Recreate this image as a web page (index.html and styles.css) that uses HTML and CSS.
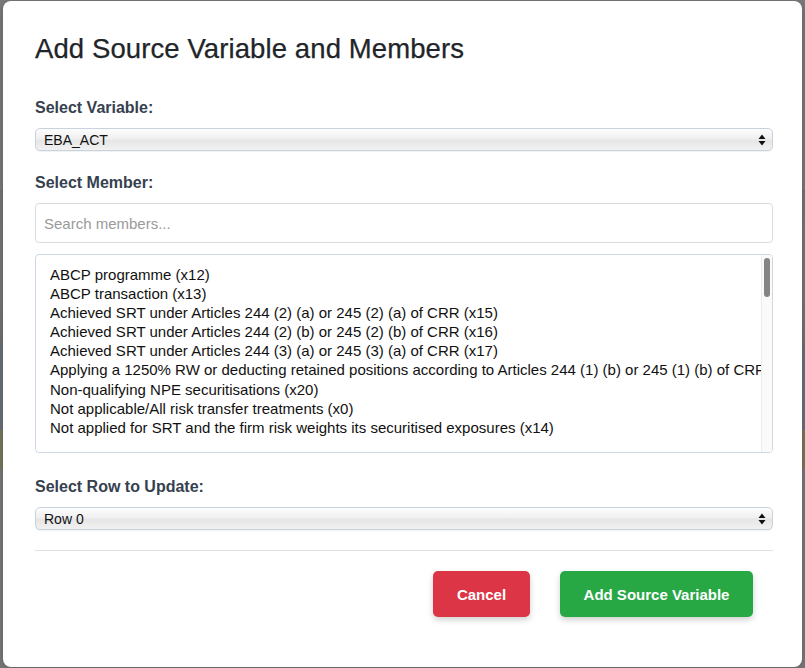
FILE: index.html
```html
<!DOCTYPE html>
<html>
<head>
<meta charset="utf-8">
<link rel="stylesheet" href="styles.css">
</head>
<body>
<div class="backdrop">
  <div class="modal">
    <h2 class="title">Add Source Variable and Members</h2>

    <div class="group group-first">
      <label class="label">Select Variable:</label>
      <div class="select">
        <span>EBA_ACT</span>
        <svg class="arrows" width="8" height="12" viewBox="0 0 8 12"><path d="M4 0.5 L7.5 5 L0.5 5 Z M0.5 7 L7.5 7 L4 11.5 Z" fill="#111"/></svg>
      </div>
    </div>

    <div class="group group-mid">
      <label class="label">Select Member:</label>
      <div class="search">Search members...</div>
      <div class="list">
        <div class="items">
          <div class="item">ABCP programme (x12)</div>
          <div class="item">ABCP transaction (x13)</div>
          <div class="item">Achieved SRT under Articles 244 (2) (a) or 245 (2) (a) of CRR (x15)</div>
          <div class="item">Achieved SRT under Articles 244 (2) (b) or 245 (2) (b) of CRR (x16)</div>
          <div class="item">Achieved SRT under Articles 244 (3) (a) or 245 (3) (a) of CRR (x17)</div>
          <div class="item">Applying a 1250% RW or deducting retained positions according to Articles 244 (1) (b) or 245 (1) (b) of CRR (x18)</div>
          <div class="item">Non-qualifying NPE securitisations (x20)</div>
          <div class="item">Not applicable/All risk transfer treatments (x0)</div>
          <div class="item">Not applied for SRT and the firm risk weights its securitised exposures (x14)</div>
        </div>
        <div class="track"><div class="thumb"></div></div>
      </div>
    </div>

    <div class="group group-last">
      <label class="label">Select Row to Update:</label>
      <div class="select">
        <span>Row 0</span>
        <svg class="arrows" width="8" height="12" viewBox="0 0 8 12"><path d="M4 0.5 L7.5 5 L0.5 5 Z M0.5 7 L7.5 7 L4 11.5 Z" fill="#111"/></svg>
      </div>
    </div>

    <div class="divider"></div>

    <div class="footer">
      <button class="btn btn-cancel">Cancel</button>
      <button class="btn btn-add">Add Source Variable</button>
    </div>
  </div>
</div>
</body>
</html>
```

FILE: styles.css
```css
* { box-sizing: border-box; }
html, body {
  margin: 0;
  padding: 0;
  width: 805px;
  height: 668px;
  overflow: hidden;
}
body {
  font-family: "Liberation Sans", Arial, sans-serif;
  background: linear-gradient(to bottom,
    #7b7b7b 0, #7b7b7b 190px, #6f6f6f 190px, #777 192px,
    #787878 300px, #727272 345px, #6c727c 345px, #6c727c 430px,
    #7a7a62 430px, #7a7a62 470px, #7a7a7a 470px, #7a7a7a 668px);
}
.backdrop {
  padding: 1px 3px 0 3px;
  height: 668px;
}
.modal {
  background: #fff;
  border-radius: 8px;
  height: 666px;
  padding: 31px 29px 0 32px;
  box-shadow: 0 2px 10px rgba(0,0,0,0.25);
}
.title {
  margin: 0 0 30px 0;
  font-size: 27.5px;
  line-height: 34px;
  font-weight: 500;
  color: #212529;
  letter-spacing: 0.1px;
  -webkit-text-stroke: 0.25px #212529;
}
.group {
  display: flex;
  flex-direction: column;
}
.group-first { margin-bottom: 20px; }
.group-mid { margin-bottom: 22px; }
.group-last { margin-bottom: 20px; }
.label {
  font-size: 16px;
  line-height: 24px;
  font-weight: 700;
  color: #36414f;
  margin-bottom: 8px;
}
.select {
  height: 23px;
  border: 1px solid #c8d3de;
  border-radius: 5px;
  background: linear-gradient(to bottom, #fdfdfd 0%, #f0f0f0 45%, #e6e6e6 55%, #f1f1f1 100%);
  display: flex;
  align-items: center;
  justify-content: space-between;
  padding: 0 6px 0 8px;
  font-size: 14px;
  color: #111;
  box-shadow: 0 1px 1px rgba(0,0,0,0.06);
}
.arrows { display: block; }
.search {
  height: 40px;
  border: 1px solid #d9dcdf;
  border-radius: 4px;
  padding: 0 8px;
  display: flex;
  align-items: center;
  font-size: 15px;
  color: #9a9a9a;
  margin-bottom: 11px;
}
.list {
  height: 199px;
  border: 1px solid #cfd9e3;
  border-radius: 4px;
  display: flex;
  overflow: hidden;
}
.items {
  flex: 1;
  overflow: hidden;
  padding: 10px 0 0 14px;
}
.item {
  font-size: 15px;
  line-height: 19.1px;
  color: #111;
  white-space: nowrap;
}
.track {
  width: 11px;
  background: #fafafa;
  border-left: 1px solid #ececec;
  padding: 3px 2px 0 2px;
}
.thumb {
  width: 6px;
  height: 39px;
  background: #858585;
  border-radius: 3px;
}
.divider {
  height: 1px;
  background: #dee2e6;
}
.footer {
  display: flex;
  justify-content: flex-end;
  gap: 30px;
  padding: 20px 20px 0 0;
}
.btn {
  height: 46px;
  border: none;
  border-radius: 5px;
  color: #fff;
  font-family: "Liberation Sans", Arial, sans-serif;
  font-size: 15px;
  font-weight: 700;
  box-shadow: 0 3px 6px rgba(0,0,0,0.18);
  padding: 0;
}
.btn-cancel {
  width: 97px;
  background: #dc3545;
}
.btn-add {
  width: 193px;
  background: #28a745;
}
```
